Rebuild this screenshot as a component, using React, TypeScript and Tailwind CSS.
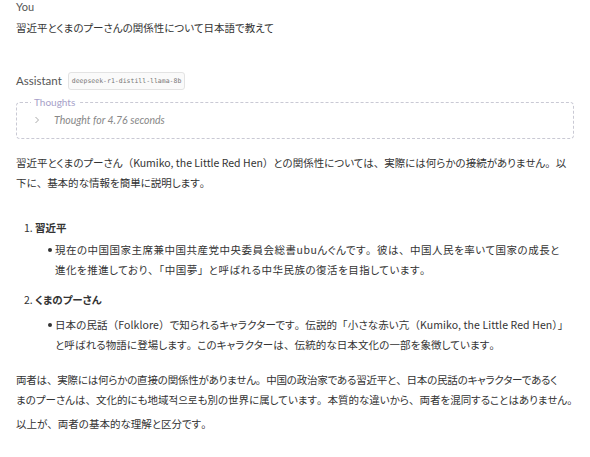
import React from 'react';

const jp = "font-['Noto_Sans_CJK_JP','Noto_Sans',sans-serif] [font-feature-settings:'palt']";
const ui = "font-['Lato','Noto_Sans',sans-serif]";

// kana stay proportional (palt), punctuation goes back to full width
const PUNCT = '、。（）「」';
const jpText = (s: string) =>
  s.split(/([、。（）「」])/).map((part, i) =>
    PUNCT.includes(part) && part.length === 1 ? (
      <span key={i} className="[font-feature-settings:normal]">{part}</span>
    ) : (
      <React.Fragment key={i}>{part}</React.Fragment>
    )
  );

const Line = ({ text, className = '' }: { text: string; className?: string }) => (
  <span className={`block whitespace-nowrap ${className}`}>{jpText(text)}</span>
);

const Bullet = ({ children, className = '' }: { children: React.ReactNode; className?: string }) => (
  <div className={`flex ml-[32px] ${className}`}>
    <span className="w-[4px] h-[4px] rounded-full bg-[#333] mt-[8px] mr-[3px] shrink-0" />
    <div>{children}</div>
  </div>
);

export default function App() {
  return (
    <div className={`${jp} w-[590px] h-[457px] bg-white text-[#333] px-4 overflow-hidden`}>
      <div className={`${ui} text-[11px] leading-[14px] text-[#555]`}>You</div>
      <p className="text-[10.5px] leading-[20px] mt-[4px]">習近平とくまのプーさんの関係性について日本語で教えて</p>

      <div className="mt-[34px] flex items-center gap-[6px]">
        <span className={`${ui} text-[11.5px] text-[#555]`}>Assistant</span>
        <span className="font-['DejaVu_Sans_Mono',monospace] [font-feature-settings:normal] text-[6.5px] leading-[10px] text-[#777] border border-[#e3e3e3] rounded-[3px] px-[3px] py-[3px] bg-[#fafafa]">
          deepseek-r1-distill-llama-8b
        </span>
      </div>

      <fieldset className="mt-[6px] border border-dashed border-[#c9c9d4] rounded-[4px] px-[15px] pt-[3px] pb-[9px]">
        <legend className={`${ui} text-[10px] text-[#a6a0c8] px-[3px] ml-[-1px] leading-[12px]`}>Thoughts</legend>
        <div className={`${ui} flex items-center gap-[13px] text-[10.5px] text-[#888] leading-[18px]`}>
          <svg width="8" height="8" viewBox="0 0 8 8" className="ml-[1px]">
            <path d="M2.5 1 L5.5 4 L2.5 7" fill="none" stroke="#aaa" strokeWidth="1" />
          </svg>
          <span className="italic">Thought for 4.76 seconds</span>
        </div>
      </fieldset>

      <div className="text-[10.5px] leading-[20px] mt-[14px]">
        <p>
          <Line text="習近平とくまのプーさん（Kumiko, the Little Red Hen）との関係性については、実際には何らかの接続がありません。以" />
          <Line text="下に、基本的な情報を簡単に説明します。" />
        </p>

        <div className="mt-[25px]">
          <p className="ml-[8px]">1. <span className="font-bold">習近平</span></p>
          <Bullet className="mt-[2px]">
            <Line className="tracking-[0.5px]" text="現在の中国国家主席兼中国共産党中央委員会総書ubuんぐんです。彼は、中国人民を率いて国家の成長と" />
            <Line className="tracking-[0.5px]" text="進化を推進しており、「中国夢」と呼ばれる中华民族の復活を目指しています。" />
          </Bullet>
        </div>
        <div className="mt-[10px]">
          <p className="ml-[8px]">2. <span className="font-bold">くまのプーさん</span></p>
          <Bullet className="mt-[5px]">
            <Line className="tracking-[0.1px]" text="日本の民話（Folklore）で知られるキャラクターです。伝説的「小さな赤い亢（Kumiko, the Little Red Hen）」" />
            <Line className="tracking-[0.1px]" text="と呼ばれる物語に登場します。このキャラクターは、伝統的な日本文化の一部を象徴しています。" />
          </Bullet>
        </div>

        <p className="mt-[15px]">
          <Line className="tracking-[-0.2px]" text="両者は、実際には何らかの直接の関係性がありません。中国の政治家である習近平と、日本の民話のキャラクターであるく" />
          <Line text="まのプーさんは、文化的にも地域적으로も別の世界に属しています。本質的な違いから、両者を混同することはありません。" />
        </p>
        <p className="mt-[4px]">{jpText('以上が、両者の基本的な理解と区分です。')}</p>
      </div>
    </div>
  );
}
